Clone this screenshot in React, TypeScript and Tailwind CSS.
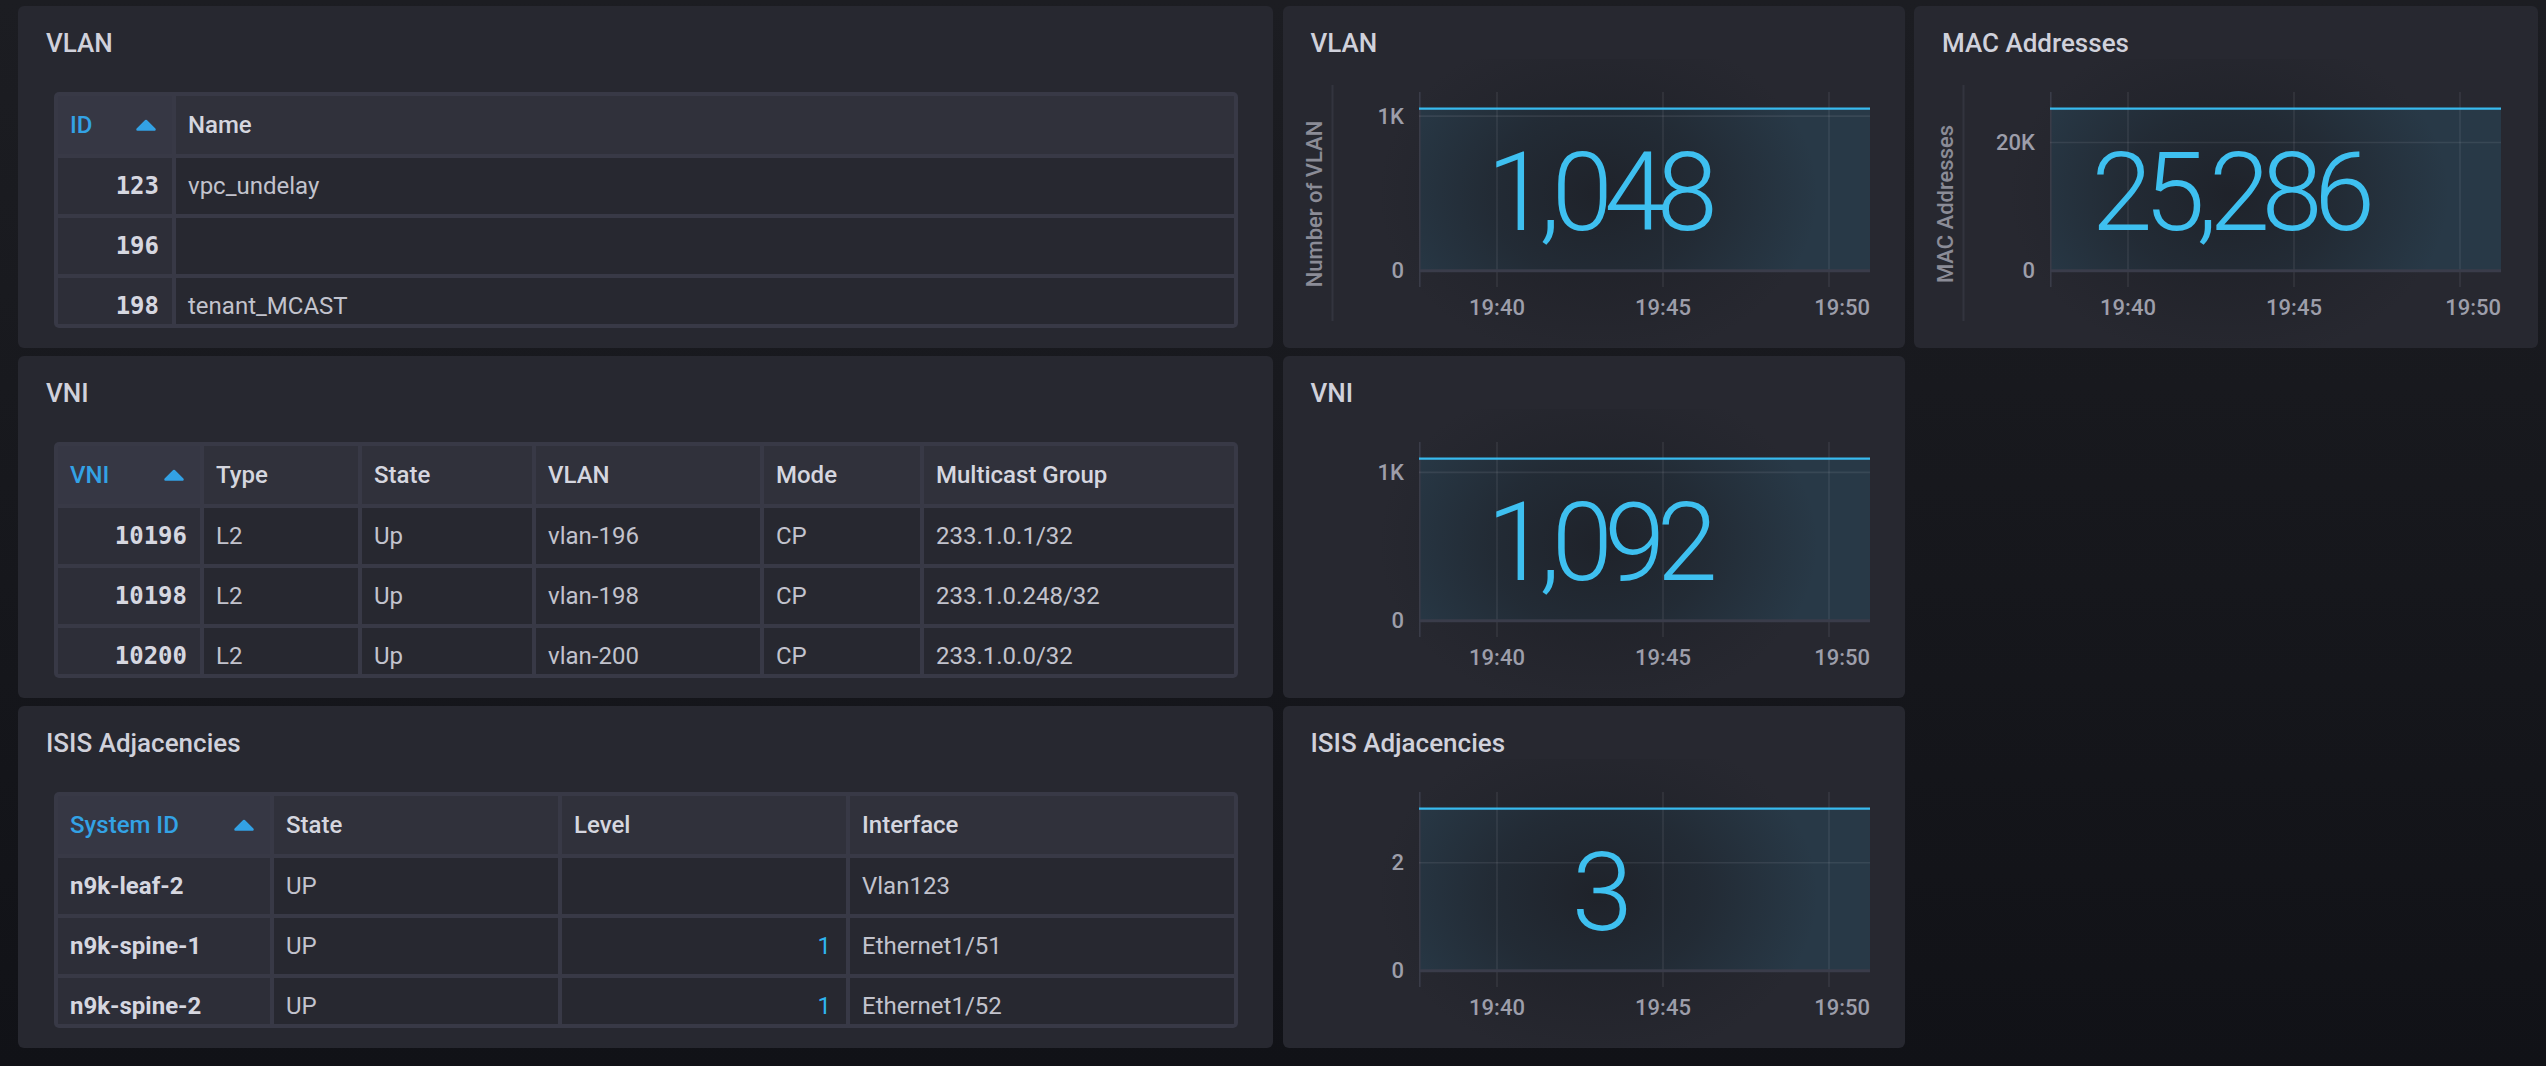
// Network fabric dashboard: three table panels on the left, stat panels
// with a flat sparkline area on the right.

type TableSpec = {
  title: string;
  cols: string[];
  template: string;
  rows: string[][];
  bodyCls: string[];
};

const NUM_CELL =
  "justify-end pr-[13px] font-bold text-[#d6d7e0] font-['DejaVu_Sans_Mono',monospace] text-[22.5px]";
const TEXT_CELL = 'pl-[12px] text-[#c2c3cd]';

const TABLES: TableSpec[] = [
  {
    title: 'VLAN',
    cols: ['ID', 'Name'],
    template: 'grid-cols-[114px_1fr]',
    rows: [
      ['123', 'vpc_undelay'],
      ['196', ''],
      ['198', 'tenant_MCAST'],
    ],
    bodyCls: [NUM_CELL, TEXT_CELL],
  },
  {
    title: 'VNI',
    cols: ['VNI', 'Type', 'State', 'VLAN', 'Mode', 'Multicast Group'],
    template: 'grid-cols-[142px_154px_170px_224px_156px_1fr]',
    rows: [
      ['10196', 'L2', 'Up', 'vlan-196', 'CP', '233.1.0.1/32'],
      ['10198', 'L2', 'Up', 'vlan-198', 'CP', '233.1.0.248/32'],
      ['10200', 'L2', 'Up', 'vlan-200', 'CP', '233.1.0.0/32'],
    ],
    bodyCls: [NUM_CELL, TEXT_CELL, TEXT_CELL, TEXT_CELL, TEXT_CELL, TEXT_CELL],
  },
  {
    title: 'ISIS Adjacencies',
    cols: ['System ID', 'State', 'Level', 'Interface'],
    template: 'grid-cols-[212px_284px_284px_1fr]',
    rows: [
      ['n9k-leaf-2', 'UP', '', 'Vlan123'],
      ['n9k-spine-1', 'UP', '1', 'Ethernet1/51'],
      ['n9k-spine-2', 'UP', '1', 'Ethernet1/52'],
    ],
    bodyCls: [
      'pl-[12px] font-bold text-[#d6d7e0]',
      TEXT_CELL,
      'justify-end pr-[15px] text-[#2fb4ef]',
      TEXT_CELL,
    ],
  },
];

function SortArrow() {
  return (
    <svg width="22" height="12" viewBox="0 0 22 12" className="mr-[3px] shrink-0">
      <path
        d="M2.5 10.5 L11 2 L19.5 10.5 Z"
        fill="#33a2e5"
        stroke="#33a2e5"
        strokeWidth="2.5"
        strokeLinejoin="round"
      />
    </svg>
  );
}

function TablePanel({ t }: { t: TableSpec }) {
  return (
    <div className="flex flex-col rounded-[6px] bg-[#272830]">
      <div className="px-[28px] pt-[21px] text-[26px] leading-[32px] font-medium text-[#d0d1db]">
        {t.title}
      </div>
      <div className="mt-[33px] ml-[36px] mr-[35px] h-[236px] rounded-[5px] bg-[#383946] p-[4px]">
        <div className="flex h-full flex-col gap-[4px] overflow-hidden">
          <div className={`grid shrink-0 gap-[4px] h-[58px] ${t.template}`}>
            {t.cols.map((c, i) =>
              i === 0 ? (
                <div
                  key={c}
                  className="flex items-center justify-between bg-[#363744] px-[12px] text-[24px] font-medium text-[#33a2e5]"
                >
                  <span>{c}</span>
                  <SortArrow />
                </div>
              ) : (
                <div
                  key={c}
                  className="flex items-center bg-[#30313b] px-[12px] text-[24px] font-medium text-[#d5d6df]"
                >
                  {c}
                </div>
              ),
            )}
          </div>
          {t.rows.map((r, ri) => (
            <div key={ri} className={`grid shrink-0 gap-[4px] h-[56px] ${t.template}`}>
              {r.map((v, ci) => (
                <div
                  key={ci}
                  className={`flex items-center text-[24px] ${
                    ci === 0 ? 'bg-[#2d2e38]' : 'bg-[#272830]'
                  } ${t.bodyCls[ci]}`}
                >
                  {v}
                </div>
              ))}
            </div>
          ))}
        </div>
      </div>
    </div>
  );
}

type ChartSpec = {
  title: string;
  value: number;
  display: string;
  tick: number;
  tickLabel: string;
  yLabel?: string;
};

const TOP_Y = 102.7;
const ZERO_Y = 264.7;
const PLOT_L = 136;
const PLOT_R = 587;
const GRID_X = [214, 380, 546];

function ChartPanel({ c }: { c: ChartSpec }) {
  const tickY = ZERO_Y - ((ZERO_Y - TOP_Y) * c.tick) / c.value;
  const gid = `glow-${c.title.replace(/\s/g, '')}`;
  return (
    <div className="flex flex-col rounded-[6px] bg-[#272830]">
      <div className="px-[28px] pt-[21px] text-[26px] leading-[32px] font-medium text-[#d0d1db]">
        {c.title}
      </div>
      <svg width="622" height="288" viewBox="0 53 622 288" className="block">
        <defs>
          <radialGradient id={gid} cx="0.5" cy="0.5" r="0.5">
            <stop offset="0" stopColor="#1e2027" stopOpacity="0.9" />
            <stop offset="0.5" stopColor="#1e2027" stopOpacity="0.55" />
            <stop offset="1" stopColor="#1e2027" stopOpacity="0" />
          </radialGradient>
        </defs>
        {c.yLabel && (
          <>
            <line x1="49.5" y1="79" x2="49.5" y2="315" stroke="#33343e" strokeWidth="2" />
            <text
              transform="translate(31 198) rotate(-90)"
              textAnchor="middle"
              dominantBaseline="central"
              fontFamily="Roboto, sans-serif"
              fontSize="22"
              fontWeight="500"
              fill="#8b8c97"
            >
              {c.yLabel}
            </text>
          </>
        )}
        <rect
          x={PLOT_L}
          y={TOP_Y}
          width={PLOT_R - PLOT_L}
          height={ZERO_Y - TOP_Y}
          fill="#33b5e5"
          fillOpacity="0.13"
        />
        <ellipse cx="315" cy="188" rx="220" ry="170" fill={`url(#${gid})`} />
        <line x1={PLOT_L + 0.8} y1="86" x2={PLOT_L + 0.8} y2="281" stroke="#3a3c48" strokeWidth="1.6" />
        {GRID_X.map((x) => (
          <line key={x} x1={x} y1="86" x2={x} y2="281" stroke="#ccccdc" strokeOpacity="0.1" strokeWidth="1.6" />
        ))}
        <line x1={PLOT_L} y1={tickY} x2={PLOT_R} y2={tickY} stroke="#ccccdc" strokeOpacity="0.1" strokeWidth="1.6" />
        <line x1={PLOT_L} y1={ZERO_Y} x2={PLOT_R} y2={ZERO_Y} stroke="#3a3c4a" strokeWidth="3" />
        <line x1={PLOT_L} y1={TOP_Y} x2={PLOT_R} y2={TOP_Y} stroke="#38baee" strokeWidth="2.2" />
        <g fontFamily="Roboto, sans-serif" fontSize="22" fontWeight="500" fill="#9d9eaa">
          <text x="121" y={tickY} textAnchor="end" dominantBaseline="central">
            {c.tickLabel}
          </text>
          <text x="121" y={ZERO_Y} textAnchor="end" dominantBaseline="central">
            0
          </text>
          <text x="214" y="301" textAnchor="middle" dominantBaseline="central">
            19:40
          </text>
          <text x="380" y="301" textAnchor="middle" dominantBaseline="central">
            19:45
          </text>
          <text x={PLOT_R} y="301" textAnchor="end" dominantBaseline="central">
            19:50
          </text>
        </g>
        <text
          x="315"
          y="224"
          textAnchor="middle"
          fontFamily="Roboto, sans-serif"
          fontSize="110"
          fontWeight="300"
          fill="#3ec0f0"
          letterSpacing="-8.5"
        >
          {c.display}
        </text>
      </svg>
    </div>
  );
}

const CHARTS: Record<string, ChartSpec> = {
  vlan: { title: 'VLAN', value: 1048, display: '1,048', tick: 1000, tickLabel: '1K', yLabel: 'Number of VLAN' },
  mac: { title: 'MAC Addresses', value: 25286, display: '25,286', tick: 20000, tickLabel: '20K', yLabel: 'MAC Addresses' },
  vni: { title: 'VNI', value: 1092, display: '1,092', tick: 1000, tickLabel: '1K' },
  isis: { title: 'ISIS Adjacencies', value: 3, display: '3', tick: 2, tickLabel: '2' },
};

export default function App() {
  return (
    <div className="h-[1066px] w-[2546px] overflow-hidden bg-[linear-gradient(180deg,#1c1d22_0%,#111217_100%)] pl-[18px] pt-[6px] font-['Roboto',sans-serif]">
      <div className="grid grid-cols-[1255px_622px_624px] grid-rows-[341.5px_341.5px_341.5px] gap-x-[9.5px] gap-y-[8.5px]">
        <TablePanel t={TABLES[0]} />
        <ChartPanel c={CHARTS.vlan} />
        <ChartPanel c={CHARTS.mac} />
        <TablePanel t={TABLES[1]} />
        <ChartPanel c={CHARTS.vni} />
        <div />
        <TablePanel t={TABLES[2]} />
        <ChartPanel c={CHARTS.isis} />
        <div />
      </div>
    </div>
  );
}
